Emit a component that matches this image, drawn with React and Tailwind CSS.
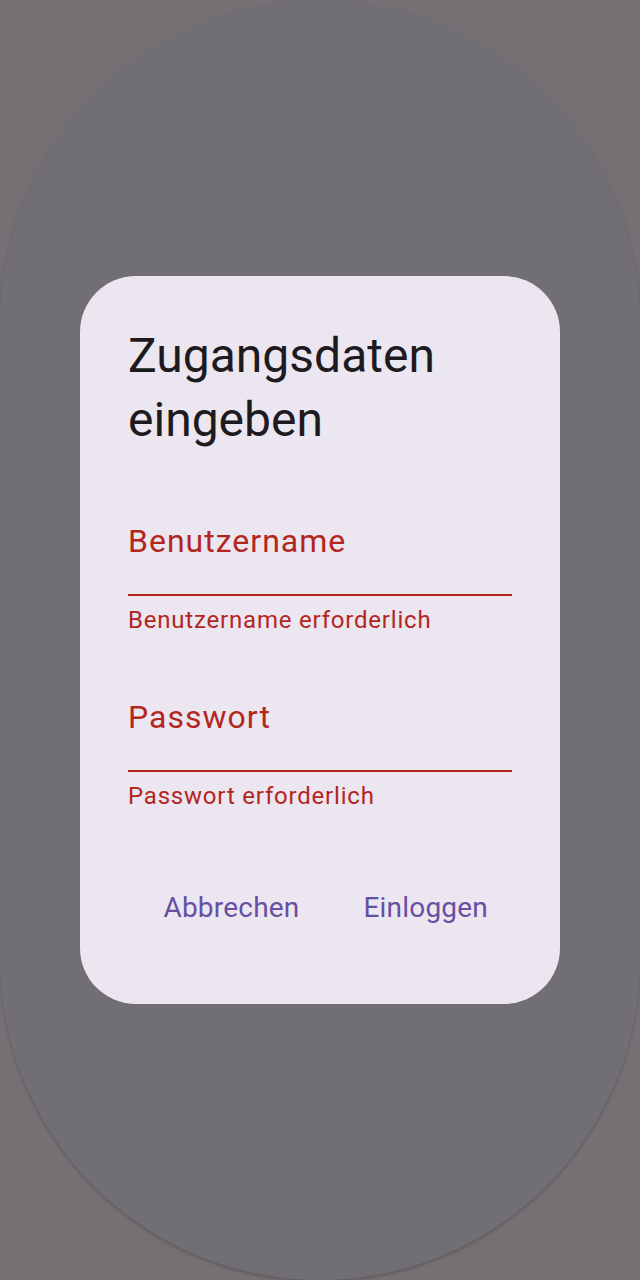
import React from 'react';

const FieldError = ({ label, helper }) => (
  <div className="flex flex-col">
    <div className="mt-[33px] text-[32px] leading-[48px] tracking-[1px] text-[#b3261e]">{label}</div>
    <div className="mt-[29px] h-[2px] bg-[#b3261e]" />
    <div className="mt-[8px] text-[24px] leading-[32px] tracking-[0.8px] text-[#b3261e]">{helper}</div>
  </div>
);

const App = () => {
  return (
    <div
      className="relative h-[1280px] w-[640px] overflow-hidden bg-[#757073]"
      style={{ fontFamily: 'Roboto, "Noto Sans", sans-serif' }}
    >
      {/* page content behind the scrim */}
      <div className="h-full w-full rounded-full bg-[#716f74] shadow-[0_2px_3px_rgba(0,0,0,0.18)]" />

      {/* dialog */}
      <div className="absolute inset-0 flex items-center justify-center">
        <div className="flex w-[480px] flex-col rounded-[56px] bg-[#ece6f0] px-[48px] pt-[48px] pb-[48px]">
          <h2 className="text-[48px] leading-[64px] font-normal text-[#1d1b20]">
            Zugangsdaten eingeben
          </h2>
          <div className="mt-[32px] flex flex-col gap-[24px]">
            <FieldError label="Benutzername" helper="Benutzername erforderlich" />
            <FieldError label="Passwort" helper="Passwort erforderlich" />
          </div>
          <div className="mt-[48px] flex h-[96px] items-center justify-end gap-[16px]">
            <button className="h-[80px] rounded-full px-[24px] text-[28px] leading-[40px] tracking-[0.2px] text-[#6750a4]">
              Abbrechen
            </button>
            <button className="h-[80px] rounded-full px-[24px] text-[28px] leading-[40px] tracking-[0.2px] text-[#6750a4]">
              Einloggen
            </button>
          </div>
        </div>
      </div>
    </div>
  );
};

export default App;
